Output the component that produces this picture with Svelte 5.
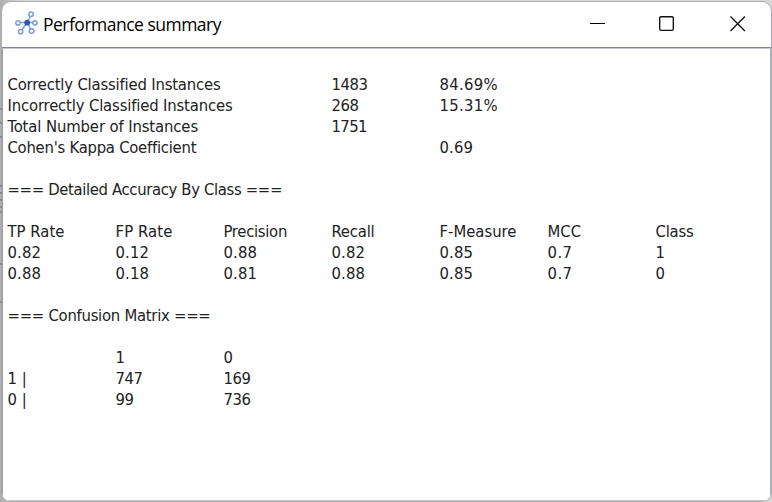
<script>
  // Each cell is [column, label, width]; an empty row is a blank line.
  const rows = [
    [[0, 'Correctly Classified Instances', 213], [3, '1483', 36], [4, '84.69%', 58.5]],
    [[0, 'Incorrectly Classified Instances', 225], [3, '268', 27], [4, '15.31%', 58.5]],
    [[0, 'Total Number of Instances', 190.5], [3, '1751', 35.5]],
    [[0, "Cohen's Kappa Coefficient", 188.5], [4, '0.69', 33.5]],
    [],
    [[0, '=== Detailed Accuracy By Class ===', 274.5]],
    [],
    [[0, 'TP Rate', 57], [1, 'FP Rate', 57], [2, 'Precision', 63.5], [3, 'Recall', 43], [4, 'F-Measure', 77], [5, 'MCC', 33.5], [6, 'Class', 38]],
    [[0, '0.82', 33.5], [1, '0.12', 33.5], [2, '0.88', 33.5], [3, '0.82', 33.5], [4, '0.85', 33.5], [5, '0.7', 25], [6, '1', 9]],
    [[0, '0.88', 33.5], [1, '0.18', 33.5], [2, '0.81', 33.5], [3, '0.88', 33.5], [4, '0.85', 33.5], [5, '0.7', 25], [6, '0', 9]],
    [],
    [[0, '=== Confusion Matrix ===', 203]],
    [],
    [[1, '1', 9], [2, '0', 9]],
    [[0, '1 |', 19.5], [1, '747', 27], [2, '169', 27]],
    [[0, '0 |', 19.5], [1, '99', 18], [2, '736', 27]]
  ];

  // Heights of the fragments of the window behind that show at the left edge.
  const marks = [109, 123, 137, 186, 193, 200, 207, 212, 264, 302];

  function fit(node, width) {
    const natural = node.getBoundingClientRect().width;
    node.style.letterSpacing = `${(width - natural) / node.textContent.length}px`;
  }
</script>

<div class="desktop">
  <svg class="behind" width="2" height="502" stroke="#62646a" stroke-width="1">
    {#each marks as y}
      <path d={`M0 ${y - 0.5}L2 ${y + 0.5}`} />
    {/each}
  </svg>
  <div class="window">
    <header>
      <svg class="logo" width="24" height="25" viewBox="0 0 24 25" fill="none" stroke="#7f9bd8" stroke-width="1.5">
        <path d="M12.3 12.5 15.8 5M12.3 12.5H3M12.3 12.5H20M12.3 12.5 6 21M12.3 12.5 16.5 20.5" />
        <g fill="#fff">
          <circle cx="16" cy="4.2" r="2.2" />
          <circle cx="3" cy="12.9" r="2.2" />
          <circle cx="20" cy="12.8" r="2.1" />
          <circle cx="5.6" cy="21.7" r="2.1" />
          <circle cx="16.6" cy="21" r="2.3" />
        </g>
        <circle cx="12.2" cy="12.7" r="2.9" fill="#3158b4" stroke="none" />
      </svg>
      <h1><span use:fit={178}>Performance summary</span></h1>
      <svg class="controls" width="156" height="16" viewBox="0 0 156 16" fill="none" stroke="#111" stroke-width="1.35">
        <path d="M0 7.5H15" stroke-width="1" stroke="#000" />
        <rect x="69.7" y=".7" width="13.6" height="13.6" rx="1.3" />
        <path d="M140.5.5 154.9 14.9M154.9.5 140.5 14.9" />
      </svg>
    </header>
    <main>
      {#each rows as row}
        <div class="row">
          {#each row as [column, label, width]}
            <div class="cell" style:grid-column={column + 1}><span use:fit={width}>{label}</span></div>
          {/each}
        </div>
      {/each}
    </main>
  </div>
</div>

<style>
  :global(body) { margin: 0; overflow: hidden; }
  .desktop {
    position: relative;
    box-sizing: border-box;
    width: 772px;
    height: 502px;
    padding: 1px 0 0 1px;
    background: linear-gradient(90deg, #b0b0b0 0 2px, #d8d8d8 20px 100%);
  }
  .behind { position: absolute; left: 0; top: 0; }
  .window {
    box-sizing: border-box;
    display: flex;
    flex-direction: column;
    width: 771px;
    height: 501px;
    border: 1px solid #acacae;
    border-radius: 10px 10px 9px 9px;
    background: #fff;
    overflow: hidden;
  }
  header {
    box-sizing: border-box;
    display: flex;
    flex: none;
    height: 46px;
    padding-left: 13px;
    border-bottom: 1px solid #85848f;
  }
  .logo { margin-top: 8px; flex: none; }
  h1 {
    margin: 7px 0 0 4px;
    width: 200px;
    font: 400 17.5px/30px "Open Sans", "Noto Sans", sans-serif;
    color: #000;
    white-space: pre;
  }
  .controls { margin: 14px 0 0 347px; flex: none; }
  main {
    flex: 1;
    padding: 25px 0 0 4.5px;
    border: 1px solid #c5c8cf;
    border-left-color: #959aa3;
    border-right-color: #a9adb6;
    font: 16.5px/21px "DejaVu Sans Condensed", "DejaVu Sans", sans-serif;
    font-stretch: condensed;
    color: #222;
  }
  .row { display: grid; grid-template-columns: repeat(7, 108px); height: 21px; }
  .cell { white-space: pre; min-width: 0; }
</style>
